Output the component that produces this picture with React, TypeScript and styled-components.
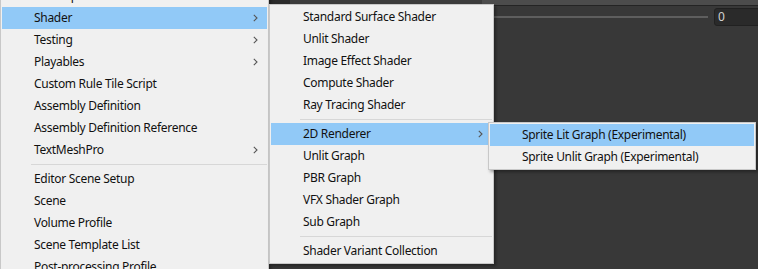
import styled, { createGlobalStyle } from 'styled-components';

const GlobalStyle = createGlobalStyle`
  html, body {
    margin: 0;
    padding: 0;
    background: #383838;
    overflow: hidden;
  }
  body {
    font-family: 'Noto Sans', 'Liberation Sans', sans-serif;
  }
`;

const Page = styled.div`
  position: relative;
  width: 758px;
  height: 269px;
  overflow: hidden;
  background: #383838;
`;

const Inspector = styled.div`
  display: flex;
  flex-direction: column;
  margin-left: 268px;
  margin-top: -13px;
  height: 282px;
`;

const FieldRow = styled.div`
  display: flex;
  height: 18px;
  font-size: 12px;
  color: #c4c4c4;
`;

const Gutter = styled.div`
  width: 22px;
  background: #2b2b2b;
`;

const Label = styled.div`
  flex: 1;
  background: #3c3c3c;
  padding-left: 10px;
  line-height: 18px;
`;

const Dropdown = styled.div`
  width: 270px;
  background: #4c4c4c;
  padding-left: 6px;
  line-height: 18px;
`;

const Divider = styled.div`
  height: 1px;
  background: #242424;
`;

const SliderRow = styled.div`
  display: flex;
  align-items: center;
  height: 18px;
  margin-top: 2px;
  padding-left: 120px;
`;

const Track = styled.div`
  flex: 1;
  height: 2px;
  background: #5e5e5e;
`;

const ValueField = styled.div`
  width: 50px;
  height: 18px;
  margin-left: 6px;
  margin-right: -6px;
  box-sizing: border-box;
  background: #2a2a2a;
  border: 1px solid #212121;
  border-radius: 3px;
  color: #d2d2d2;
  font-size: 12px;
  line-height: 16px;
  padding-left: 3px;
`;

const Menu = styled.div<{ $left: number; $top: number; $width: number }>`
  position: absolute;
  left: ${(p) => p.$left}px;
  top: ${(p) => p.$top}px;
  width: ${(p) => p.$width}px;
  box-sizing: border-box;
  background: #f0f0f0;
  border: 1px solid #c8c8c8;
  padding: 1px;
  box-shadow: 2px 2px 3px rgba(0, 0, 0, 0.35);
  font-size: 12px;
  letter-spacing: -0.3px;
  color: #111;
`;

const Item = styled.div<{ $active?: boolean }>`
  display: flex;
  align-items: center;
  height: 22px;
  box-sizing: border-box;
  padding: 0 9px 2px 32px;
  background: ${(p) => (p.$active ? '#91c9f7' : 'transparent')};
  white-space: nowrap;
  span {
    flex: 1;
  }
  svg {
    margin-top: 2px;
  }
`;

const Separator = styled.div`
  height: 1px;
  margin: 3px 0 3px 29px;
  background: #d7d7d7;
`;

const Chevron = () => (
  <svg width="5" height="8" viewBox="0 0 5 8">
    <path d="M0.8 0.8 L4 4 L0.8 7.2" fill="none" stroke="#555" strokeWidth="1.1" />
  </svg>
);

type Entry = { label: string; sub?: boolean; active?: boolean } | 'sep';

const createMenu: Entry[] = [
  { label: 'C# Script' },
  { label: 'Shader', sub: true, active: true },
  { label: 'Testing', sub: true },
  { label: 'Playables', sub: true },
  { label: 'Custom Rule Tile Script' },
  { label: 'Assembly Definition' },
  { label: 'Assembly Definition Reference' },
  { label: 'TextMeshPro', sub: true },
  'sep',
  { label: 'Editor Scene Setup' },
  { label: 'Scene' },
  { label: 'Volume Profile' },
  { label: 'Scene Template List' },
  { label: 'Post-processing Profile' },
];

const shaderMenu: Entry[] = [
  { label: 'Standard Surface Shader' },
  { label: 'Unlit Shader' },
  { label: 'Image Effect Shader' },
  { label: 'Compute Shader' },
  { label: 'Ray Tracing Shader' },
  'sep',
  { label: '2D Renderer', sub: true, active: true },
  { label: 'Unlit Graph' },
  { label: 'PBR Graph' },
  { label: 'VFX Shader Graph' },
  { label: 'Sub Graph' },
  'sep',
  { label: 'Shader Variant Collection' },
];

const rendererMenu: Entry[] = [
  { label: 'Sprite Lit Graph (Experimental)', active: true },
  { label: 'Sprite Unlit Graph (Experimental)' },
];

const MenuItems = ({ items }: { items: Entry[] }) => (
  <>
    {items.map((it, i) =>
      it === 'sep' ? (
        <Separator key={i} />
      ) : (
        <Item key={i} $active={it.active}>
          <span>{it.label}</span>
          {it.sub && <Chevron />}
        </Item>
      )
    )}
  </>
);

export default function App() {
  return (
    <Page>
      <GlobalStyle />
      <Inspector>
        <FieldRow>
          <Gutter />
          <Label>Filter Mode</Label>
          <Dropdown>Bilinear</Dropdown>
        </FieldRow>
        <Divider />
        <SliderRow>
          <Track />
          <ValueField>0</ValueField>
        </SliderRow>
      </Inspector>

      <Menu $left={0} $top={-17} $width={269}>
        <MenuItems items={createMenu} />
      </Menu>
      <Menu $left={269} $top={4} $width={225}>
        <MenuItems items={shaderMenu} />
      </Menu>
      <Menu $left={488} $top={122} $width={268}>
        <MenuItems items={rendererMenu} />
      </Menu>
    </Page>
  );
}
